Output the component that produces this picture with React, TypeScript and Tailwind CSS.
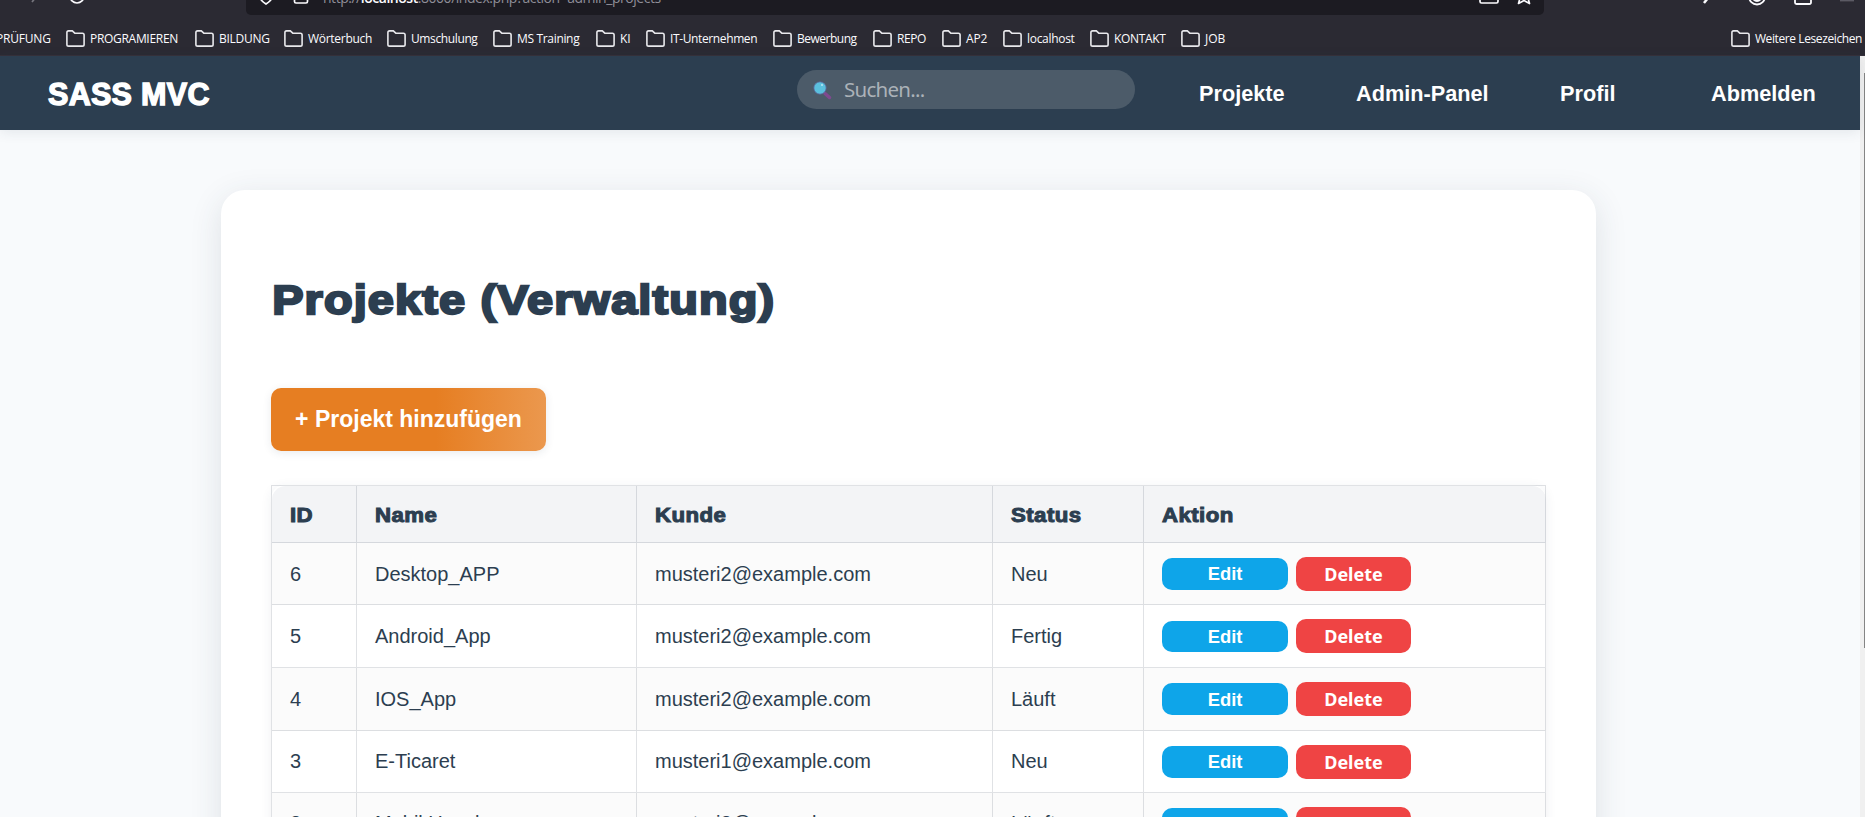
import React from "react";

const bookmarks: { label: string; cell: string; text: string }[] = [
  { label: "PROGRAMIEREN", cell: "w-[129px]", text: "tracking-[-0.3px]" },
  { label: "BILDUNG", cell: "w-[89px]", text: "tracking-[-0.28px]" },
  { label: "Wörterbuch", cell: "w-[103px]", text: "tracking-[-0.28px]" },
  { label: "Umschulung", cell: "w-[106px]", text: "tracking-[-0.38px]" },
  { label: "MS Training", cell: "w-[103px]", text: "tracking-[-0.33px]" },
  { label: "KI", cell: "w-[50px]", text: "tracking-[-0.2px]" },
  { label: "IT-Unternehmen", cell: "w-[127px]", text: "tracking-[-0.38px]" },
  { label: "Bewerbung", cell: "w-[100px]", text: "tracking-[-0.5px]" },
  { label: "REPO", cell: "w-[69px]", text: "tracking-[-0.4px]" },
  { label: "AP2", cell: "w-[61px]", text: "tracking-[-0.2px]" },
  { label: "localhost", cell: "w-[87px]", text: "tracking-[-0.3px]" },
  { label: "KONTAKT", cell: "w-[91px]", text: "tracking-[-0.35px]" },
  { label: "JOB", cell: "w-[60px]", text: "tracking-[0px]" },
];

function Folder() {
  return (
    <svg width="19" height="17" viewBox="0 0 19 17" fill="none" stroke="#e8e8ec" strokeWidth="1.6" className="-mt-[2px] shrink-0">
      <path d="M.9 14V2.6Q.9.9 2.6.9H6.3L8.8 3.2H16.4Q18.1 3.2 18.1 4.9V14.4Q18.1 16.1 16.4 16.1H2.6Q.9 16.1.9 14.4Z" />
    </svg>
  );
}

const projects = [
  { id: 6, name: "Desktop_APP", client: "musteri2@example.com", status: "Neu", h: "h-[62px]", edit: "h-8", text: "" },
  { id: 5, name: "Android_App", client: "musteri2@example.com", status: "Fertig", h: "h-[63px]", edit: "h-[31px]", text: "" },
  { id: 4, name: "IOS_App", client: "musteri2@example.com", status: "Läuft", h: "h-[63px]", edit: "h-8", text: "" },
  { id: 3, name: "E-Ticaret", client: "musteri1@example.com", status: "Neu", h: "h-[62px]", edit: "h-8", text: "pb-[2px]" },
  { id: 2, name: "Mobil Uygulama", client: "musteri2@example.com", status: "Läuft", h: "h-[62px]", edit: "h-8", text: "pb-[2px]" },
];

const cols = "grid grid-cols-[85px_280px_356px_151px_402px]";
const cell = "flex items-center border-r border-[#2c3e50]/15 pl-[18px]";
const heavy = "origin-left font-bold";

export default function App() {
  return (
    <div className="flex h-[817px] w-[1865px] flex-col overflow-hidden bg-[#f8fafc] font-['Liberation_Sans',sans-serif] text-[#2c3e50]">
      <div className="flex h-14 shrink-0 flex-col border-b border-[#35303a] bg-[#2b2a33]">
        <div className="flex h-[15px] overflow-hidden text-[#fbfbfe]">
          <div className="w-[246px]">
            <svg width="246" height="15" fill="none" stroke="#fbfbfe" strokeWidth="1.7">
              <path d="M32 2L36-3" stroke="#77767e" />
              <circle cx="77" cy="-4" r="7" />
            </svg>
          </div>
          <div className="flex h-[15px] w-[1298px] rounded-b-[5px] bg-[#1c1b22]">
            <svg width="77" height="15" fill="none" stroke="#fbfbfe" strokeWidth="1.7" className="shrink-0">
              <path d="M14.5-1Q16 1.5 20 4Q24 1.5 25.5-1" />
              <rect x="48.5" y="-8" width="13" height="11" rx="1.5" />
            </svg>
            <div className="-mt-[12px] h-[20px] w-[1151px] font-['Open_Sans',sans-serif] text-[14px] leading-[20px] tracking-[-0.47px] text-[#8f8e98]">
              http://<span className="font-semibold text-[#fbfbfe]">localhost</span>:8000/index.php?action=admin_projects
            </div>
            <svg width="70" height="15" fill="none" stroke="#fbfbfe" strokeWidth="1.7" className="shrink-0">
              <rect x="6" y="-10" width="18" height="13" rx="1.5" />
              <path d="M46-2L44.5 3.5L50 .5L55.5 3.5L54-2" strokeLinejoin="round" />
            </svg>
          </div>
          <svg width="321" height="15" fill="none" stroke="#fbfbfe" strokeWidth="1.8">
            <path d="M160 3L164-2" strokeWidth="2.5" />
            <circle cx="213" cy="-3.5" r="8" />
            <path d="M209-1Q213 3 217-1" />
            <rect x="251" y="-8" width="16" height="12" rx="1.5" />
            <path d="M296 .5H310" stroke="#5b5a64" />
          </svg>
        </div>
        <div className="flex h-10 items-center overflow-hidden pt-[8px] font-['Open_Sans',sans-serif] text-[12px] leading-4 whitespace-nowrap text-[#fbfbfe]">
          <div className="flex w-[66px] shrink-0">
            <span className="-ml-1 tracking-[-0.2px]">PRÜFUNG</span>
          </div>
          {bookmarks.map((b) => (
            <div key={b.label} className={`flex shrink-0 items-center gap-[5px] ${b.cell}`}>
              <Folder />
              <span className={b.text}>{b.label}</span>
            </div>
          ))}
          <div className="ml-auto flex shrink-0 items-center gap-[5px] pr-[3px]">
            <Folder />
            <span className="tracking-[-0.4px]">Weitere Lesezeichen</span>
          </div>
        </div>
      </div>

      <div className="flex min-h-0 flex-1">
        <div className="flex w-[1860px] flex-col">
          <header className="relative flex h-[74px] shrink-0 bg-[#2c3e50] text-white shadow-[0_2px_12px_rgba(44,62,80,0.10)]">
            <div className="flex w-[797px] items-center pt-[2px] pl-[48px]">
              <span className="text-[30.5px] leading-9 font-bold tracking-[0.3px] [-webkit-text-stroke:1.4px_white]">SASS MVC</span>
            </div>
            <div className="mt-[14px] flex h-[39px] w-[338px] items-center rounded-full bg-[#4c5b69] pl-4">
              <svg width="19" height="20" viewBox="0 0 19 20" className="shrink-0">
                <path d="M12 13.5L16.5 17.5" stroke="#7f4a8f" strokeWidth="3.5" strokeLinecap="round" />
                <circle cx="7" cy="8" r="6.2" fill="#5bc0de" stroke="#5b5f94" strokeWidth=".8" />
                <circle cx="9" cy="5" r="1" fill="#b8e8f5" />
              </svg>
              <span className="ml-3 font-['Noto_Sans',sans-serif] text-[20.5px] tracking-[-0.75px] text-[#abb2b8]">Suchen...</span>
            </div>
            <nav className="flex items-center pt-[2px] text-[21.7px] font-bold whitespace-nowrap">
              <span className="ml-[64px] w-[157px]">Projekte</span>
              <span className="w-[204px]">Admin-Panel</span>
              <span className="w-[151px]">Profil</span>
              <span>Abmelden</span>
            </nav>
          </header>

          <main className="mt-[60px] ml-[221px] flex h-[760px] w-[1375px] shrink-0 flex-col rounded-t-[24px] bg-white px-[50px] shadow-[0_8px_32px_rgba(44,62,80,0.13)]">
            <h1 className={`mt-[83px] pl-px text-[41.5px] leading-[54px] tracking-[1px] whitespace-nowrap scale-x-[1.13] [-webkit-text-stroke:2.3px_#2c3e50] ${heavy}`}>
              Projekte (Verwaltung)
            </h1>
            <button className="mt-[61px] h-[63px] w-[275px] shrink-0 rounded-[10px] bg-[linear-gradient(90deg,#e67e22_60%,#eb984e_100%)] text-[23px] font-bold whitespace-nowrap text-white shadow-[0_2px_8px_rgba(44,62,80,0.10)]">
              + Projekt hinzufügen
            </button>
            <div className="mt-[34px] w-[1275px] rounded-t-[14px] text-[20px] shadow-[0_2px_12px_rgba(44,62,80,0.07)]">
              <div className="border-t border-l border-[#2c3e50]/15">
                <div className={`h-[57px] rounded-t-[14px] border-b border-[#2c3e50]/15 bg-[#f3f4f6] ${cols}`}>
                  {["ID", "Name", "Kunde", "Status", "Aktion"].map((t) => (
                    <div key={t} className={`pt-[2px] ${cell}`}>
                      <span className={`scale-x-[1.11] tracking-[0.4px] [-webkit-text-stroke:1px_#2c3e50] ${heavy}`}>{t}</span>
                    </div>
                  ))}
                </div>
                {projects.map((p) => (
                  <div key={p.id} className={`border-b border-[#2c3e50]/15 odd:bg-white even:bg-[#fbfbfb] ${p.h} ${cols}`}>
                    <div className={`${cell} ${p.text}`}>{p.id}</div>
                    <div className={`${cell} ${p.text}`}>{p.name}</div>
                    <div className={`${cell} ${p.text}`}>{p.client}</div>
                    <div className={`${cell} ${p.text}`}>{p.status}</div>
                    <div className={`${cell} gap-2 font-bold text-white`}>
                      <button className={`w-[126px] rounded-[10px] bg-[#0ea5e9] pt-[2px] text-[18.4px] leading-none ${p.edit}`}>Edit</button>
                      <button className="h-[34px] w-[115px] rounded-[10px] bg-[#ef4444] font-['Noto_Sans',sans-serif] text-[18px] leading-none">Delete</button>
                    </div>
                  </div>
                ))}
              </div>
            </div>
          </main>
        </div>
        <div className="flex w-[5px] justify-end bg-[#f0f0f0] pt-[17px]">
          <div className="h-[575px] w-px bg-[#858585]" />
        </div>
      </div>
    </div>
  );
}
